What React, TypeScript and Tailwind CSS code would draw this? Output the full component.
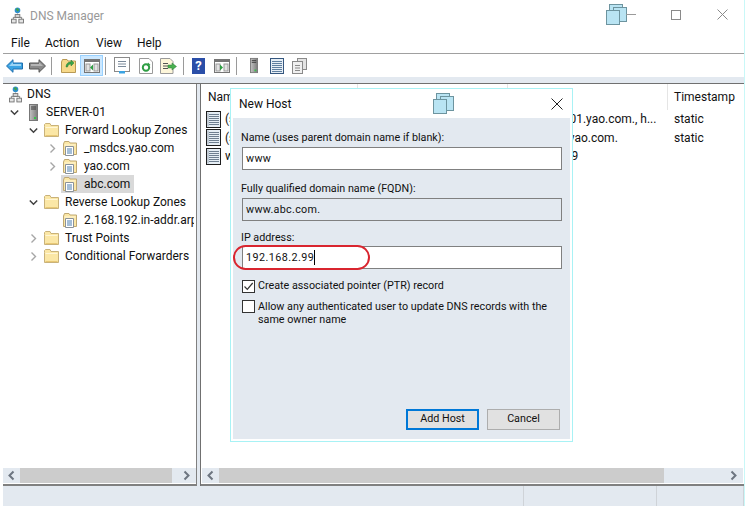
import { ReactNode } from "react";

const Chevron = ({ open, left, dark }: { open?: boolean; left?: boolean; dark?: boolean }) => {
  if (open) {
    return (
      <svg width="9" height="9" viewBox="0 0 9 9" className="shrink-0">
        <path d="M0.8 2.5 L4.5 6.2 L8.2 2.5" fill="none" stroke="#404040" strokeWidth="1.5" />
      </svg>
    );
  }
  return (
    <svg width="9" height="11" viewBox="0 0 9 11" className="shrink-0">
      <path
        d={left ? "M6.5 1.5 L2.5 5.5 L6.5 9.5" : "M2.5 1.5 L6.5 5.5 L2.5 9.5"}
        fill="none"
        stroke={dark ? "#6d7580" : "#a6a6a6"}
        strokeWidth={dark ? 2 : 1.4}
      />
    </svg>
  );
};

const Folder = () => (
  <svg width="15" height="14" viewBox="0 0 15 14" className="shrink-0">
    <path d="M0.5 3.5 V13.5 H14.5 V2.5 H7 L6 0.5 H1.5 L0.5 1.5 Z" fill="#fbe7a6" stroke="#c9b27a" />
    <path d="M1.5 4.5 H13.5" stroke="#fff6d6" />
    <path d="M1.5 12.5 H13.5" stroke="#e8c875" />
  </svg>
);

const ZoneIcon = () => (
  <svg width="15" height="15" viewBox="0 0 15 15" className="shrink-0">
    <path d="M0.5 3 V13.5 H13.5 V2 H7 L6 0.5 H1.5 Z" fill="#fbe7a6" stroke="#bfa873" />
    <path d="M1.5 4 H12.5" stroke="#fff6d6" />
    <path d="M2.5 5.5 H10.5 V14.5 H2.5 Z" fill="#ffffff" stroke="#8a9299" />
    <path d="M4 8 H9 M4 10 H9 M4 12 H9" stroke="#4a7fb0" />
  </svg>
);

const DnsIcon = () => (
  <svg width="13" height="17" viewBox="0 0 14 18" className="shrink-0">
    <circle cx="7" cy="3.5" r="3" fill="#2f8fd0" />
    <path d="M5 2 L7 1 L9 3 L7 5 Z" fill="#3fa34d" />
    <path d="M7 7 V10 M2.5 13 V11 H11.5 V13" fill="none" stroke="#777" />
    <rect x="4.5" y="8" width="5" height="3" fill="#d9d9d9" stroke="#777" />
    <rect x="0.5" y="13" width="5" height="4" fill="#e4e4e4" stroke="#777" />
    <rect x="8.5" y="13" width="5" height="4" fill="#e4e4e4" stroke="#777" />
  </svg>
);

const ServerIcon = ({ w = 9, h = 17 }: { w?: number; h?: number }) => (
  <svg width={w} height={h} viewBox="0 0 9 17" className="shrink-0">
    <defs>
      <linearGradient id="srv" x1="0" x2="1" y1="0" y2="0">
        <stop offset="0" stopColor="#c4c4c4" />
        <stop offset="1" stopColor="#7a7a7a" />
      </linearGradient>
    </defs>
    <rect x="0.5" y="0.5" width="8" height="16" fill="url(#srv)" stroke="#777" />
    <path d="M2 3 H7 M2 5 H7" stroke="#3c3c3c" />
    <rect x="5" y="13" width="2" height="2" fill="#37c24a" />
  </svg>
);

const RecordIcon = () => (
  <svg width="15" height="17" viewBox="0 0 15 17" className="shrink-0">
    <rect x="0.5" y="0.5" width="14" height="16" fill="#e6eef5" stroke="#1e1e1e" />
    <path d="M3 3.5 H13 M3 5.5 H13 M3 7.5 H13 M3 9.5 H13 M3 11.5 H13 M3 13.5 H13" stroke="#6f7f90" />
    <path d="M2 1.5 V15.5" stroke="#9aa5b0" />
  </svg>
);

const Stacked = ({ line }: { line?: boolean }) => (
  <svg width={line ? 30 : 22} height="22" viewBox={line ? "0 0 30 22" : "0 0 22 22"} className="shrink-0">
    <rect x="3.5" y="0.5" width="13" height="13" fill="#b9e4f3" stroke="#6d949f" />
    <rect x="7.5" y="3.5" width="13" height="14" fill="#b9e4f3" stroke="#6d949f" />
    <rect x="0.5" y="6.5" width="13" height="14" fill="#b9e4f3" stroke="#6d949f" />
    {line && <path d="M20 10.5 H30" stroke="#9a9a9a" />}
  </svg>
);

const PaneWindow = ({ arrow }: { arrow: "left" | "right" }) => (
  <svg width="16" height="16" viewBox="0 0 16 16">
    <rect x="0.5" y="1.5" width="15" height="13" fill="#ffffff" stroke="#757575" />
    <rect x="1" y="2" width="14" height="2" fill="#757575" />
    <rect x="2" y="6" width="4" height="7" fill="#e3e3e3" stroke="#9a9a9a" />
    <rect x="10" y="6" width="4" height="7" fill="#e3e3e3" stroke="#9a9a9a" />
    <path d={arrow === "left" ? "M9 6.5 V12.5 L6 9.5 Z" : "M6 6.5 V12.5 L9 9.5 Z"} fill="#2f9e44" />
  </svg>
);

const Sep = () => <div className="w-px h-[18px] bg-[#9a9a9a] shrink-0" />;

const Toolbar = () => (
  <div className="flex items-center h-[23px] pl-[3px] shrink-0 bg-white">
    <div className="w-[23px] shrink-0">
      <svg width="17" height="14" viewBox="0 0 17 14">
        <path d="M0.5 7 L7 0.7 V4 H16.5 V10 H7 V13.3 Z" fill="#3aa3e3" stroke="#1f6fae" />
        <path d="M3 7 L7 3 V5 H15 V7 Z" fill="#9bd4f5" />
      </svg>
    </div>
    <div className="w-[22px] shrink-0">
      <svg width="17" height="14" viewBox="0 0 17 14">
        <path d="M16.5 7 L10 0.7 V4 H0.5 V10 H10 V13.3 Z" fill="#8a8a8a" stroke="#555" />
        <path d="M2 5 H10 V3 L14 7 H2 Z" fill="#b5b5b5" />
      </svg>
    </div>
    <Sep />
    <div className="ml-[9px] w-[19px] shrink-0">
      <svg width="15" height="15" viewBox="0 0 15 15">
        <path d="M0.5 4 V14.5 H14.5 V3 H7 L6 1.5 H1.5 Z" fill="#f7d98a" stroke="#b99a55" />
        <path d="M5 9 C5 6 7 4 10 4 V2 L13 5 L10 8 V6 C8 6 7 7 6.5 9 Z" fill="#3aa54a" stroke="#2b7d38" strokeWidth="0.5" />
      </svg>
    </div>
    <div className="w-[23px] h-[21px] flex items-center justify-center shrink-0 bg-[#cce8ff] border border-[#99d1ff]">
      <PaneWindow arrow="left" />
    </div>
    <div className="ml-[2px]">
      <Sep />
    </div>
    <div className="ml-[8px] w-[25px] shrink-0">
      <svg width="16" height="17" viewBox="0 0 16 17">
        <rect x="0.5" y="0.5" width="15" height="14" fill="#fff" stroke="#8a8a8a" />
        <path d="M4 4.5 H12 M4 7 H12 M4 9.5 H12" stroke="#7a8a9a" />
        <rect x="5" y="14" width="6" height="2.5" fill="#3aa3e3" />
      </svg>
    </div>
    <div className="w-[21px] shrink-0">
      <svg width="14" height="16" viewBox="0 0 14 16">
        <path d="M0.5 0.5 H10 L13.5 4 V15.5 H0.5 Z" fill="#fff" stroke="#9a9a9a" />
        <circle cx="7" cy="9.5" r="3.2" fill="none" stroke="#2f9e44" strokeWidth="2" />
        <path d="M9 4.5 L11.5 7 L8 8 Z" fill="#2f9e44" />
      </svg>
    </div>
    <div className="w-[23px] shrink-0">
      <svg width="17" height="16" viewBox="0 0 17 16">
        <path d="M0.5 0.5 H10 L13 3.5 V15.5 H0.5 Z" fill="#fdf6da" stroke="#9a9a9a" />
        <path d="M3 5.5 H8 M3 8 H8 M3 10.5 H8" stroke="#555" />
        <path d="M8 7 H12 V5 L16.5 8.5 L12 12 V10 H8 Z" fill="#49b04f" stroke="#2b7d38" strokeWidth="0.5" />
      </svg>
    </div>
    <Sep />
    <div className="ml-[8px] w-[22px] shrink-0">
      <div className="w-[13px] h-[16px] bg-[#2a4ea8] text-white font-bold text-[13px] leading-[16px] text-center">
        ?
      </div>
    </div>
    <div className="w-[22px] shrink-0">
      <PaneWindow arrow="right" />
    </div>
    <Sep />
    <div className="ml-[13px] w-[20px] shrink-0">
      <ServerIcon w={8} h={17} />
    </div>
    <div className="w-[22px] shrink-0">
      <svg width="14" height="16" viewBox="0 0 14 16">
        <rect x="0.5" y="0.5" width="13" height="15" fill="#e6eef5" stroke="#35577f" />
        <path d="M2 3.5 H12 M2 5.5 H12 M2 7.5 H12 M2 9.5 H12 M2 11.5 H12 M2 13.5 H12" stroke="#5f7f9f" />
      </svg>
    </div>
    <div className="shrink-0">
      <svg width="15" height="16" viewBox="0 0 15 16">
        <rect x="5.5" y="0.5" width="9" height="11" fill="#e4e4e4" stroke="#8a8a8a" />
        <rect x="0.5" y="3.5" width="10" height="12" fill="#f0f0f0" stroke="#8a8a8a" />
        <path d="M3 7.5 H8 M3 10 H8 M3 12.5 H8" stroke="#8a8a8a" />
      </svg>
    </div>
  </div>
);

const TreeRow = ({
  indent,
  chevron,
  icon,
  iconBox = "w-[21px]",
  label,
  selected,
}: {
  indent: string;
  chevron?: "open" | "closed";
  icon: ReactNode;
  iconBox?: string;
  label: string;
  selected?: boolean;
}) => (
  <div className={`flex items-center h-[18px] whitespace-nowrap ${indent}`}>
    <div className="w-[13px] shrink-0 flex items-center">
      {chevron === "open" && <Chevron open />}
      {chevron === "closed" && <Chevron />}
    </div>
    <div className={`flex items-center h-[18px] pl-[2px] pr-[4px] ${selected ? "bg-[#d9d9d9]" : ""}`}>
      <div className={`${iconBox} shrink-0 flex items-center`}>{icon}</div>
      <span>{label}</span>
    </div>
  </div>
);

const ScrollBar = ({ thumb, left, right }: { thumb: string; left: string; right: string }) => (
  <div className="flex h-[15px] shrink-0 mb-px">
    <div className={`${left} bg-[#e3e9f0] flex items-center justify-center shrink-0`}>
      <Chevron left dark />
    </div>
    <div className={`${thumb} bg-[#cccccc] shrink-0`} />
    <div className={`${right} bg-[#e3e9f0] flex items-center justify-end pr-[5px] shrink-0`}>
      <Chevron dark />
    </div>
  </div>
);

const Field = ({ label, value, ro }: { label: string; value: string; ro?: boolean }) => (
  <div className="flex flex-col">
    <div className="h-[20px] leading-[22px] pl-[8px]">{label}</div>
    <div
      className={`ml-[9px] w-[320px] h-[23px] border border-[#808080] pl-[3px] leading-[21px] tracking-[0.3px] ${
        ro ? "bg-[#e3e9f0]" : "bg-white"
      }`}
    >
      {value}
    </div>
  </div>
);

const Dialog = () => (
  <div className="absolute left-[230px] top-[88px] w-[343px] h-[354px] bg-white border border-[#a8f2f5] flex flex-col">
    <div className="flex items-center h-[29px] pl-[8px] pr-[9px] relative shrink-0">
      <span className="text-[12px]">New Host</span>
      <div className="absolute left-[202px] top-[4px]">
        <Stacked />
      </div>
      <svg width="12" height="12" viewBox="0 0 12 12" className="ml-auto">
        <path d="M0.5 0.5 L11.5 11.5 M11.5 0.5 L0.5 11.5" stroke="#222" />
      </svg>
    </div>
    <div className="flex-1 ml-[2px] mr-[2px] mb-[2px] bg-[#e3e9f0] flex flex-col pt-[9px] text-[10.75px]">
      <Field label="Name (uses parent domain name if blank):" value="www" />
      <div className="mt-[8px]">
        <Field label="Fully qualified domain name (FQDN):" value="www.abc.com." ro />
      </div>
      <div className="mt-[6px] flex flex-col">
        <div className="h-[19px] leading-[22px] pl-[8px]">IP address:</div>
        <div className="relative ml-[9px] w-[320px] h-[23px] border border-[#808080] bg-white pl-[3px] leading-[21px] tracking-[0.45px] flex items-center">
          <span>192.168.2.99</span>
          <span className="w-px h-[15px] bg-black" />
          <div className="absolute left-[-10px] top-[-2px] w-[137px] h-[25px] rounded-full border-[2px] border-[#d9252f]" />
        </div>
      </div>
      <div className="flex items-center mt-[9px] ml-[9px]">
        <div className="w-[13px] h-[13px] border border-[#333] bg-white flex items-center justify-center shrink-0">
          <svg width="11" height="11" viewBox="0 0 11 11">
            <path d="M1.5 5.5 L4.3 8.3 L9.7 2" fill="none" stroke="#333" strokeWidth="1.2" />
          </svg>
        </div>
        <span className="ml-[3px] leading-[16px]">Create associated pointer (PTR) record</span>
      </div>
      <div className="flex items-start mt-[6px] ml-[9px]">
        <div className="w-[13px] h-[13px] border border-[#333] bg-white shrink-0" />
        <span className="ml-[3px] leading-[13px] w-[300px]">
          Allow any authenticated user to update DNS records with the same owner name
        </span>
      </div>
      <div className="mt-auto mb-[9px] ml-[173px] flex gap-[8px]">
        <button className="w-[73px] h-[21px] bg-[#e1e1e1] border-[2px] border-[#0078d7] leading-none">
          Add Host
        </button>
        <button className="w-[73px] h-[21px] bg-[#e1e1e1] border border-[#adadad] leading-none">
          Cancel
        </button>
      </div>
    </div>
  </div>
);

const rows = [
  ["(same as parent folder)", "Start of Authority (SOA)", "[15], server-01.yao.com., h...", "static", ""],
  ["(same as parent folder)", "Name Server (NS)", "server-01.yao.com.", "static", "pl-[8px]"],
  ["www", "Host (A)", "192.168.2.99", "", ""],
];

export default function App() {
  return (
    <div
      className="relative w-[746px] h-[509px] bg-white overflow-hidden text-[12px] text-[#111]"
      style={{ fontFamily: "Roboto, 'Liberation Sans', sans-serif" }}
    >
      <div className="flex flex-col w-[742px] h-[506px] ml-[3px] border-r border-[#c9f8f8]">
        {/* title bar */}
        <div className="flex items-center h-[33px] shrink-0 relative">
          <div className="ml-[8px] mr-[6px] -mt-[2px]">
            <DnsIcon />
          </div>
          <span className="text-[#999999] -mt-px">DNS Manager</span>
          <div className="ml-auto -mt-[4px] flex items-center">
            <Stacked line />
            <div className="ml-[35px] w-[10px] h-[10px] border border-[#8a8a8a]" />
            <svg width="11" height="11" viewBox="0 0 11 11" className="ml-[36px] mr-[16px]">
              <path d="M0.5 0.5 L10.5 10.5 M10.5 0.5 L0.5 10.5" stroke="#8a8a8a" />
            </svg>
          </div>
        </div>
        {/* menu */}
        <div className="flex items-center h-[20px] pl-[8px] shrink-0">
          <span className="w-[34px]">File</span>
          <span className="w-[51px]">Action</span>
          <span className="w-[41px]">View</span>
          <span>Help</span>
        </div>
        <div className="h-px bg-[#a0a0a0] shrink-0" />
        <Toolbar />
        <div className="h-[6px] bg-[#e3e9f0] shrink-0" />
        <div className="h-px bg-[#707070] shrink-0" />
        {/* panes */}
        <div className="flex flex-1 min-h-0 bg-[#e3e9f0]">
          <div className="w-[194px] bg-white flex flex-col border-b-2 border-r border-[#808080] overflow-hidden shrink-0">
            <div className="flex-1 min-h-0 overflow-hidden pt-px mr-[2px]">
              <TreeRow indent="-ml-[9px]" icon={<DnsIcon />} iconBox="w-[18px]" label="DNS" />
              <TreeRow
                indent="pl-[7px]"
                chevron="open"
                icon={
                  <div className="ml-[4px]">
                    <ServerIcon />
                  </div>
                }
                label="SERVER-01"
              />
              <TreeRow indent="pl-[26px]" chevron="open" icon={<Folder />} label="Forward Lookup Zones" />
              <TreeRow indent="pl-[45px]" chevron="closed" icon={<ZoneIcon />} label="_msdcs.yao.com" />
              <TreeRow indent="pl-[45px]" chevron="closed" icon={<ZoneIcon />} label="yao.com" />
              <TreeRow indent="pl-[45px]" icon={<ZoneIcon />} label="abc.com" selected />
              <TreeRow indent="pl-[26px]" chevron="open" icon={<Folder />} label="Reverse Lookup Zones" />
              <TreeRow indent="pl-[45px]" icon={<ZoneIcon />} label="2.168.192.in-addr.arpa" />
              <TreeRow indent="pl-[26px]" chevron="closed" icon={<Folder />} label="Trust Points" />
              <TreeRow indent="pl-[26px]" chevron="closed" icon={<Folder />} label="Conditional Forwarders" />
            </div>
            <ScrollBar left="w-[17px]" thumb="w-[152px]" right="w-[24px]" />
          </div>
          <div className="w-[3px] shrink-0" />
          <div className="w-px bg-[#707070] shrink-0" />
          <div className="flex-1 min-w-0 bg-white flex flex-col border-b-2 border-[#808080]">
            <div className="flex-1 min-h-0 overflow-hidden">
              <div className="grid grid-cols-[157px_150px_160px_1fr] h-[24px] items-center">
                <span className="pl-[7px] border-r border-[#e5e5e5] h-full leading-[26px]">Name</span>
                <span className="pl-[6px] border-r border-[#e5e5e5] h-full leading-[26px]">Type</span>
                <span className="pl-[6px] border-r border-[#e5e5e5] h-full leading-[26px]">Data</span>
                <span className="pl-[6px] h-full leading-[26px]">Timestamp</span>
              </div>
              <div className="mt-[2px] flex flex-col">
                {rows.map((r, i) => (
                  <div
                    key={i}
                    className="grid grid-cols-[157px_150px_160px_1fr] h-[18.5px] items-center whitespace-nowrap"
                  >
                    <span className="flex items-center pl-[5px] gap-[4px]">
                      <RecordIcon />
                      {r[0]}
                    </span>
                    <span className="pl-[6px]">{r[1]}</span>
                    <span className={r[4]}>{r[2]}</span>
                    <span className="pl-[6px]">{r[3]}</span>
                  </div>
                ))}
              </div>
            </div>
            <div className="pl-px">
              <ScrollBar left="w-[17px]" thumb="w-[445px]" right="w-[79px]" />
            </div>
          </div>
        </div>
        {/* status bar */}
        <div className="h-[20px] bg-[#e3e9f0] shrink-0 flex">
          <div className="w-[521px] border-r border-[#cfd3d8]" />
          <div className="w-[133px] border-r border-[#cfd3d8]" />
          <div className="flex-1 border-r border-[#cfd3d8]" />
        </div>
      </div>
      <Dialog />
    </div>
  );
}
